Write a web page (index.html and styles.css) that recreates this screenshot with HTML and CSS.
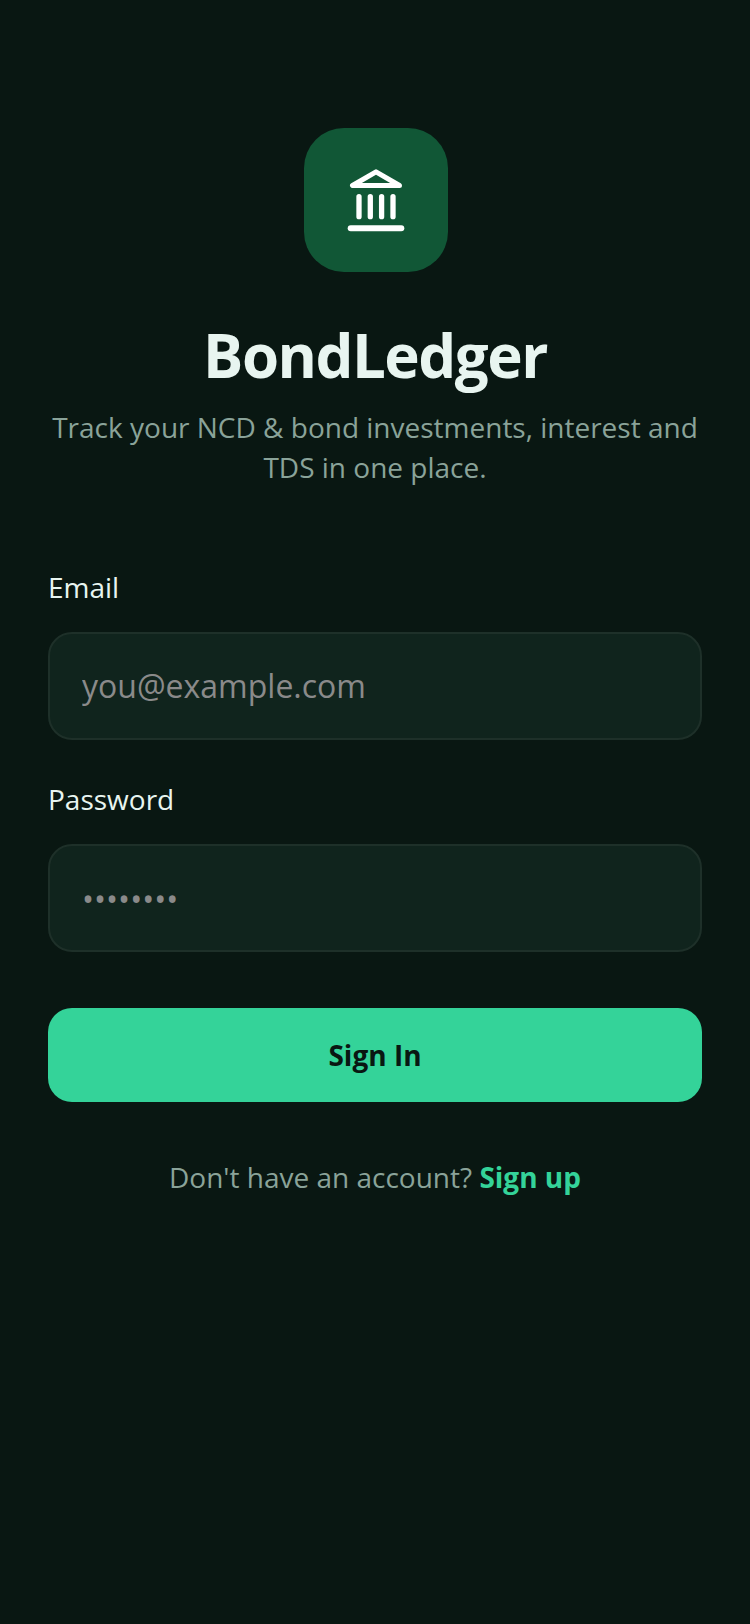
FILE: index.html
```html
<!DOCTYPE html>
<html lang="en">
<head>
<meta charset="utf-8">
<title>BondLedger</title>
<link rel="stylesheet" href="styles.css">
</head>
<body>
<main class="screen">
  <div class="logo">
    <svg class="logo-icon" viewBox="0 0 72 72" width="72" height="72" fill="none" stroke="#fff" stroke-width="5.300" stroke-linecap="round" stroke-linejoin="round">
      <path d="M12.500 21.500H59.500L36 7.800Z" stroke-width="5"/>
      <path d="M19 32.600V52.700M30.300 32.600V52.700M41.600 32.600V52.700M53 32.600V52.700"/>
      <path d="M10.700 64.300H61.300" stroke-width="6"/>
    </svg>
  </div>
  <h1 class="title">BondLedger</h1>
  <p class="subtitle">Track your NCD &amp; bond investments, interest and TDS in one place.</p>
  <form class="form">
    <label class="label" for="email">Email</label>
    <input class="input input-email" id="email" type="email" placeholder="you@example.com">
    <label class="label label-second" for="password">Password</label>
    <input class="input" id="password" type="password" placeholder="••••••••">
    <button class="submit" type="button">Sign In</button>
  </form>
  <p class="footer">Don't have an account? <a class="link" href="#">Sign up</a></p>
</main>
</body>
</html>
```

FILE: styles.css
```css
* { box-sizing: border-box; }
html, body { margin: 0; height: 100%; }
body {
  background: #091712;
  font-family: "Open Sans", sans-serif;
}
.screen {
  display: flex;
  flex-direction: column;
  align-items: center;
  padding: 128px 48px 0;
  min-height: 1624px;
}
.logo {
  width: 144px;
  height: 144px;
  margin-left: 2px;
  border-radius: 40px;
  background: #115736;
  display: flex;
  align-items: center;
  justify-content: center;
}
.logo-icon { overflow: visible; }
.title {
  margin: 43px 0 0;
  font-size: 60px;
  line-height: 80px;
  font-weight: 700;
  letter-spacing: -1.5px;
  color: #e8f5f0;
}
.subtitle {
  margin: 12px 0 0;
  font-size: 28px;
  line-height: 40px;
  color: #8aa399;
  text-align: center;
}
.form {
  align-self: stretch;
  display: flex;
  flex-direction: column;
  margin-top: 81px;
}
.label {
  font-size: 28px;
  line-height: 38px;
  color: #e8f5f0;
  margin-bottom: 26px;
}
.label-second { margin-top: 40px; }
.input {
  height: 108px;
  padding: 0 32px;
  border: 2px solid #1e3029;
  border-radius: 24px;
  background: #10241d;
  font-family: inherit;
  font-size: 32px;
  color: #e8f5f0;
  outline: none;
}
.input-email { padding-bottom: 2px; }
.input::placeholder { color: #8a8a8a; opacity: 1; }
.submit {
  margin-top: 56px;
  height: 94px;
  border: 0;
  border-radius: 24px;
  background: #34d399;
  color: #091712;
  font-family: inherit;
  font-size: 28px;
  font-weight: 700;
}
.footer {
  margin: 55px 0 0;
  font-size: 28px;
  line-height: 40px;
  color: #8aa399;
  text-align: center;
}
.link {
  color: #34d399;
  font-weight: 700;
  text-decoration: none;
}
```
